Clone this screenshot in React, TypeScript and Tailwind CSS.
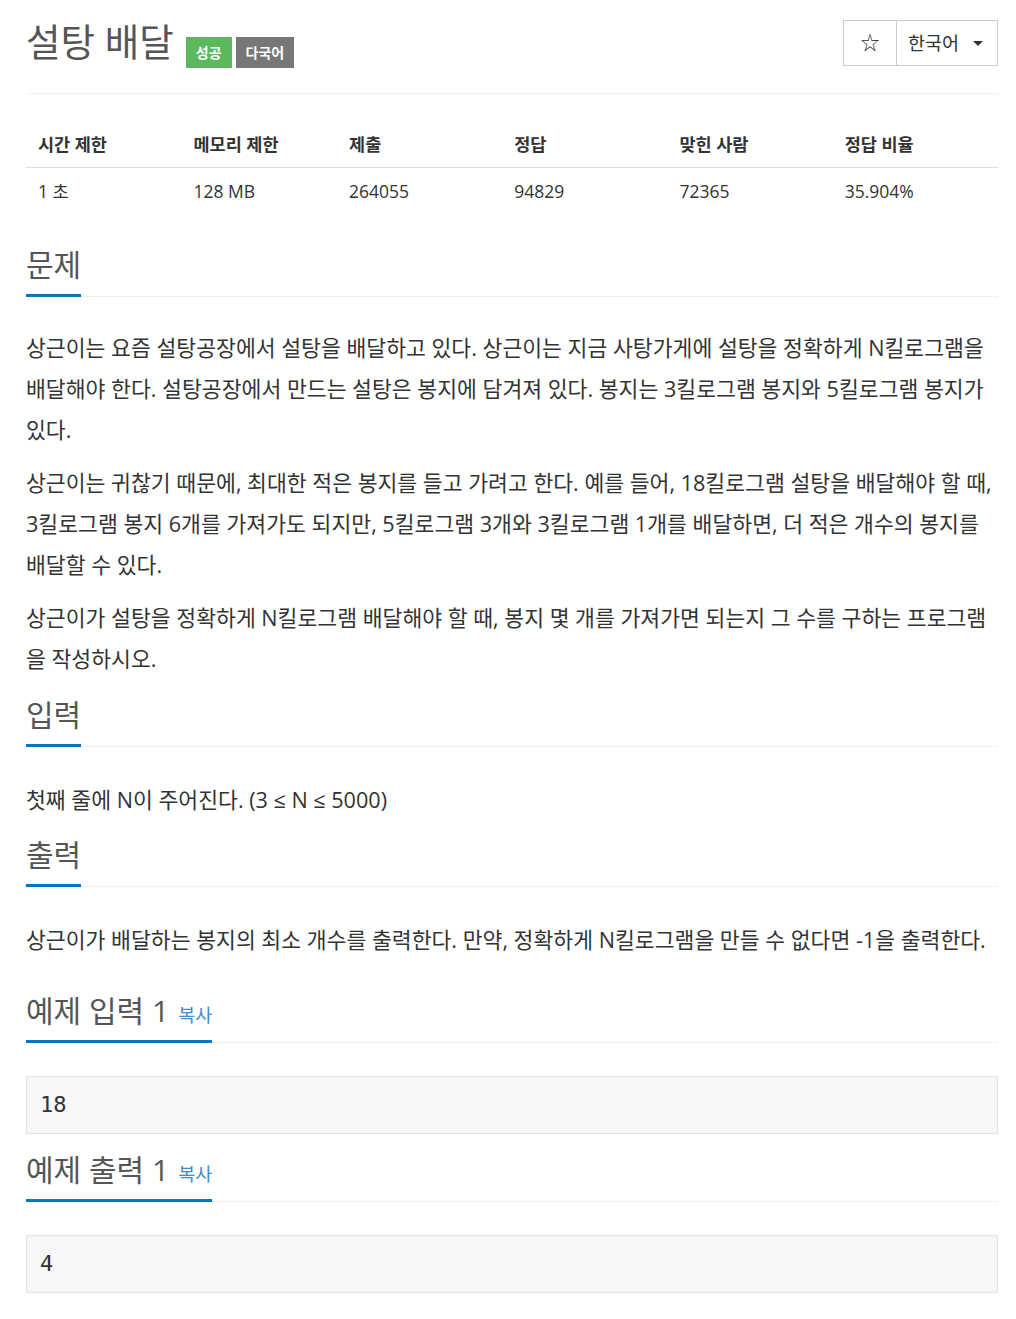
const font = { fontFamily: '"Open Sans", "Noto Sans CJK KR", sans-serif' };

const stats = [
  { label: '시간 제한', value: '1 초', w: 'w-[16%]' },
  { label: '메모리 제한', value: '128 MB', w: 'w-[16%]' },
  { label: '제출', value: '264055', w: 'w-[17%]' },
  { label: '정답', value: '94829', w: 'w-[17%]' },
  { label: '맞힌 사람', value: '72365', w: 'w-[17%]' },
  { label: '정답 비율', value: '35.904%', w: 'w-[17%]' }
];

const Headline = ({ title, copy }: { title: string; copy?: boolean }) => (
  <div className="flex border-b border-dotted border-[#ddd]">
    <h2 className="-mb-px flex h-[49px] items-baseline border-b-[3px] border-[#0076c0] pb-[12px] text-[30px] leading-[33px] font-normal text-[#555]">
      {title}
      {copy && <span className="ml-[9px] text-[18.5px] leading-none text-[#428bca]">복사</span>}
    </h2>
  </div>
);

const Sample = ({ value }: { value: string }) => (
  <pre
    className="border border-[#e1e1e8] bg-[#f7f7f9] px-[13px] py-[13px] text-[22px] leading-[30px] text-[#333]"
    style={{ fontFamily: '"DejaVu Sans Mono", monospace' }}>
    {value}
  </pre>
);

export default function App() {
  return (
    <div className="min-h-screen bg-white pl-[26px] pr-[18px] text-[#333]" style={font}>
      <div className="flex items-start justify-between border-b border-[#eee] pt-[20px] pb-[27px]">
        <div className="flex items-end pt-[2px]">
          <h1 className="text-[37.5px] leading-[40px] font-normal text-[#555]">설탕 배달</h1>
          <span className="ml-[12px] mb-[-6px] flex h-[31px] items-center bg-[#5cb85c] px-[10px] text-[14px] font-bold text-white">
            성공
          </span>
          <span className="ml-[4px] mb-[-6px] flex h-[31px] items-center bg-[#777] px-[10px] text-[14px] font-bold text-white">
            다국어
          </span>
        </div>
        <div className="flex h-[46px] border border-[#ccc] text-[#333]">
          <div className="flex w-[53px] items-center justify-center border-r border-[#ccc]">
            <span className="text-[19px] leading-none">☆</span>
          </div>
          <div className="flex w-[100px] items-center pl-[11px] text-[18.5px]">
            한국어
            <span className="ml-[14px] h-0 w-0 border-x-[5px] border-t-[5px] border-x-transparent border-t-[#333]" />
          </div>
        </div>
      </div>

      <table className="mt-[30px] w-full table-fixed text-left text-[17.5px]">
        <thead>
          <tr className="border-b border-[#ddd]">
            {stats.map((s) => (
              <th key={s.label} className={`${s.w} px-3 pt-[8px] pb-[11px] leading-[24px] font-bold`}>
                {s.label}
              </th>
            ))}
          </tr>
        </thead>
        <tbody>
          <tr>
            {stats.map((s) => (
              <td key={s.label} className="px-3 py-[11px] leading-[24px]">
                {s.value}
              </td>
            ))}
          </tr>
        </tbody>
      </table>

      <section className="mt-[34px]">
        <Headline title="문제" />
        <div className="mt-[30px] flex flex-col gap-[12px] text-[21.6px] leading-[41px]">
          <p>
            상근이는 요즘 설탕공장에서 설탕을 배달하고 있다. 상근이는 지금 사탕가게에 설탕을 정확하게 N킬로그램을
            배달해야 한다. 설탕공장에서 만드는 설탕은 봉지에 담겨져 있다. 봉지는 3킬로그램 봉지와 5킬로그램 봉지가
            있다.
          </p>
          <p>
            상근이는 귀찮기 때문에, 최대한 적은 봉지를 들고 가려고 한다. 예를 들어, 18킬로그램 설탕을 배달해야 할 때,
            3킬로그램 봉지 6개를 가져가도 되지만, 5킬로그램 3개와 3킬로그램 1개를 배달하면, 더 적은 개수의 봉지를
            배달할 수 있다.
          </p>
          <p>
            상근이가 설탕을 정확하게 N킬로그램 배달해야 할 때, 봉지 몇 개를 가져가면 되는지 그 수를 구하는 프로그램을
            작성하시오.
          </p>
        </div>
      </section>

      <section className="mt-[19px]">
        <Headline title="입력" />
        <p className="mt-[32px] text-[21.6px] leading-[41px]">첫째 줄에 N이 주어진다. (3 ≤ N ≤ 5000)</p>
      </section>

      <section className="mt-[18px]">
        <Headline title="출력" />
        <p className="mt-[32px] text-[21.6px] leading-[41px]">
          상근이가 배달하는 봉지의 최소 개수를 출력한다. 만약, 정확하게 N킬로그램을 만들 수 없다면 -1을 출력한다.
        </p>
      </section>

      <section className="mt-[34px]">
        <Headline title="예제 입력 1" copy />
        <div className="mt-[33px]">
          <Sample value="18" />
        </div>
      </section>

      <section className="mt-[19px] pb-[26px]">
        <Headline title="예제 출력 1" copy />
        <div className="mt-[33px]">
          <Sample value="4" />
        </div>
      </section>
    </div>
  );
}
